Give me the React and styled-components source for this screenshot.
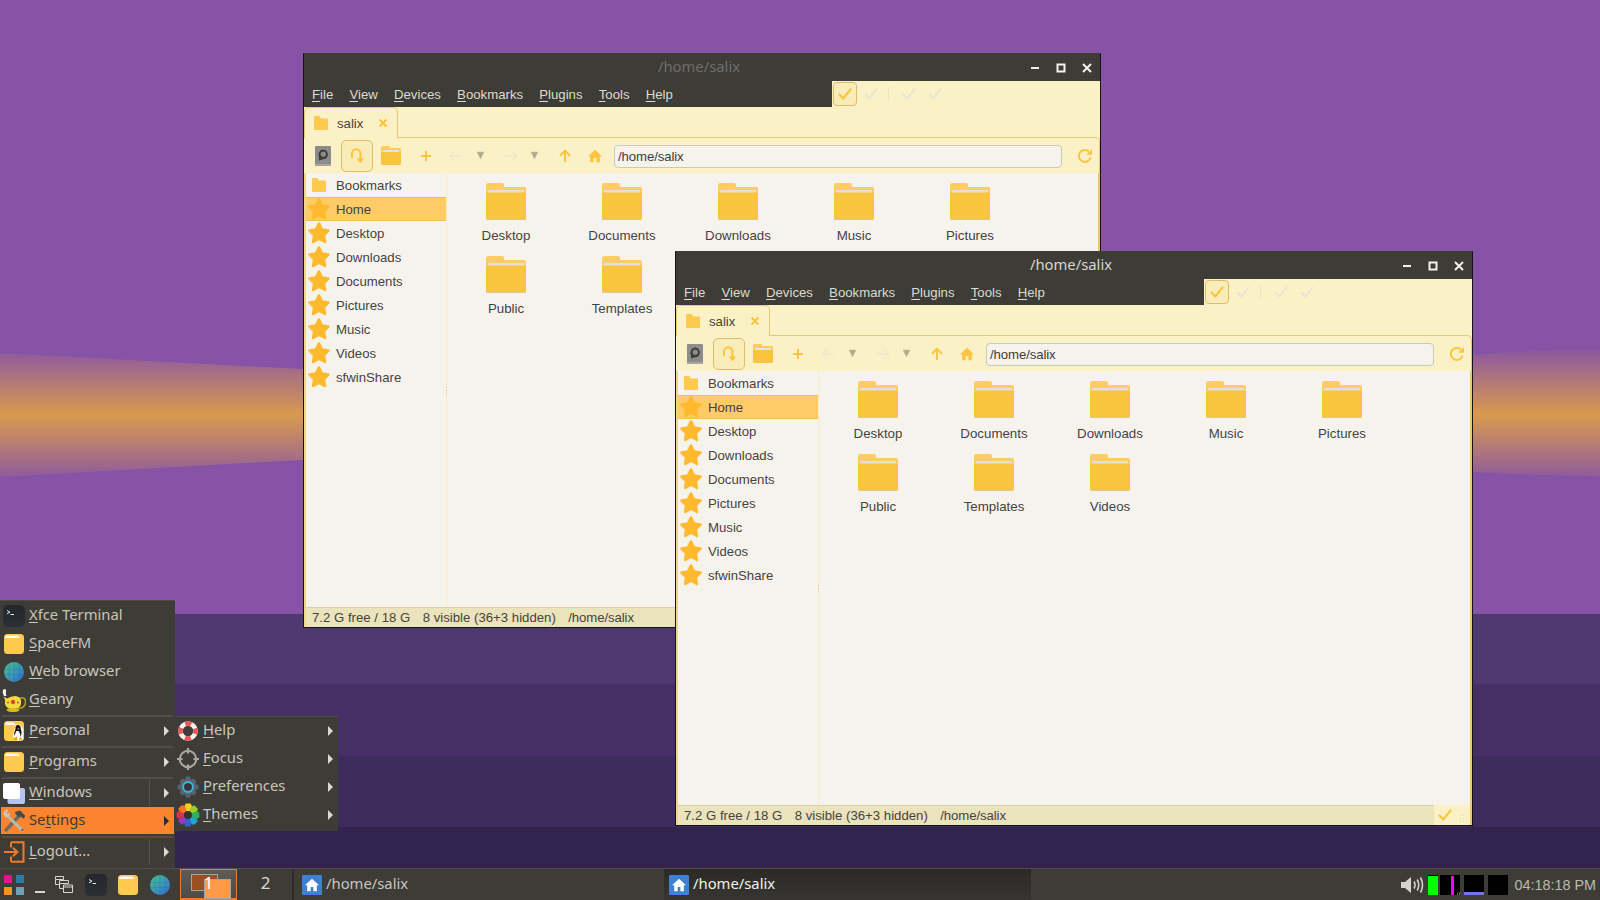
import React from 'react';
import styled, { createGlobalStyle } from 'styled-components';

const DARK = '#3d3c37';
const CREAM = '#fbf1c7';
const PAPER = '#f6f3ed';
const LINE = '#e4c873';
const AMBER = '#fdc440';

const GlobalStyle = createGlobalStyle`
  html, body { margin: 0; padding: 0; background: #8653a6; }
  * { box-sizing: border-box; }
`;

const Desktop = styled.div`
  position: relative;
  width: 1600px;
  height: 900px;
  overflow: hidden;
  display: flex;
  flex-direction: column;
  justify-content: flex-end;
  font-family: "Liberation Sans", Arial, sans-serif;
`;

const Wall = styled.svg`
  position: absolute;
  left: 0;
  top: 0;
`;

const Wallpaper = () => (
  <Wall width="1600" height="900" viewBox="0 0 1600 900">
    <defs>
      <linearGradient id="sun" gradientUnits="userSpaceOnUse" x1="0" y1="345" x2="0" y2="485">
        <stop offset="0" stopColor="#8653a6" />
        <stop offset="0.5" stopColor="#d99a4e" />
        <stop offset="1" stopColor="#8653a6" />
      </linearGradient>
    </defs>
    <rect width="1600" height="900" fill="#8653a6" />
    <path d="M0 353 L300 369 Q800 395 1473 355 Q1540 349 1600 350 L1600 476 Q1540 476 1473 472 Q800 430 300 460 L0 477 Z" fill="url(#sun)" />
    <rect y="614" width="1600" height="71" fill="#4d3870" />
    <rect y="684" width="1600" height="72" fill="#452f65" />
    <rect y="756" width="1600" height="71" fill="#3e2d5c" />
    <rect y="827" width="1600" height="73" fill="#32244e" />
  </Wall>
);

/* ---------- drawn icons ---------- */

const Svg = ({ s = 16, h, vb, children }) => (
  <svg width={s} height={h || s} viewBox={vb || `0 0 ${s} ${h || s}`} style={{ display: 'block', flex: 'none' }}>
    {children}
  </svg>
);

const FolderBig = () => (
  <Svg s={40} h={37}>
    <path d="M0 2.5Q0 0 2.5 0H16Q18 0 18 2V4H38Q40 4 40 6V12H0Z" fill="#ffcb66" />
    <rect x="2" y="7" width="36" height="5" fill="#e2e0dc" />
    <path d="M0 10H1.5L2 9.5H38L38.5 10H40V34.5Q40 37 37.5 37H2.5Q0 37 0 34.5Z" fill="#f9c53f" />
    <rect y="36" width="40" height="1" fill="#d9c89a" rx="0.5" />
  </Svg>
);

const FolderSmall = () => (
  <Svg s={14} h={14}>
    <path d="M0 1Q0 0 1 0H5.5L7 2.5H13Q14 2.5 14 3.5V13Q14 14 13 14H1Q0 14 0 13Z" fill="#fdc94f" />
  </Svg>
);

const FolderTool = () => (
  <Svg s={20} h={19}>
    <path d="M0 1.5Q0 0 1.5 0H8Q9 0 9 1V2H19Q20 2 20 3V6H0Z" fill="#ffcb66" />
    <rect x="2" y="4" width="16" height="2" fill="#e6e3dc" />
    <path d="M0 6H20V17.5Q20 19 18.5 19H1.5Q0 19 0 17.5Z" fill="#f9c53f" />
  </Svg>
);

const Star = () => (
  <Svg s={22} vb="1 1 20 20">
    <path d="M11 2.5L13.6 8 19.5 8.8 15.2 13 16.3 19 11 16.1 5.7 19 6.8 13 2.5 8.8 8.4 8Z" fill="#ffb92e" stroke="#ffb92e" strokeWidth="2.6" strokeLinejoin="round" />
  </Svg>
);

const Check = ({ c = AMBER, s = 16 }) => (
  <Svg s={s} vb="0 0 16 16">
    <path d="M2.5 8.5L6.2 12.5 13.5 3.5" fill="none" stroke={c} strokeWidth="2.2" strokeLinecap="round" strokeLinejoin="round" />
  </Svg>
);

const ArrowLeft = ({ c }) => (
  <Svg s={14} vb="0 0 14 14">
    <path d="M13 7H2M6.5 2L1.5 7l5 5" fill="none" stroke={c} strokeWidth="1.7" />
  </Svg>
);
const ArrowRight = ({ c }) => (
  <Svg s={14} vb="0 0 14 14">
    <path d="M1 7H12M7.5 2l5 5-5 5" fill="none" stroke={c} strokeWidth="1.7" />
  </Svg>
);
const ArrowUp = () => (
  <Svg s={14} vb="0 0 14 14">
    <path d="M7 13V2M2 6.8L7 1.6l5 5.2" fill="none" stroke={AMBER} strokeWidth="2" />
  </Svg>
);
const Plus = () => (
  <Svg s={12} vb="0 0 12 12">
    <path d="M6 1V11M1 6H11" stroke={AMBER} strokeWidth="2" />
  </Svg>
);
const DropTriangle = () => (
  <Svg s={10} h={9}>
    <path d="M1 1H8L4.5 8Z" fill="#aea98f" stroke="#c9c5a8" strokeWidth="0.6" />
  </Svg>
);
const HomeGlyph = ({ c = AMBER, s = 14 }) => (
  <Svg s={s} vb="0 0 14 14">
    <path d="M7 0.8L0 7.2H2.2V13.2H5.6V9H8.4V13.2H11.8V7.2H14Z" fill={c} />
  </Svg>
);
const Reload = () => (
  <Svg s={16} vb="0 0 16 16">
    <path d="M13.6 9.5A6 6 0 1 1 11.8 3.4" fill="none" stroke={AMBER} strokeWidth="2" />
    <path d="M15 1V6.8H9.2Z" fill={AMBER} />
  </Svg>
);
const UTurn = () => (
  <Svg s={14} h={16} vb="0 0 14 16">
    <path d="M2 10V5.5a4.2 4.2 0 0 1 8.4 0V13" fill="none" stroke={AMBER} strokeWidth="2" />
    <path d="M6.8 10.5H14L10.4 15.5Z" fill={AMBER} />
  </Svg>
);
const FindIcon = () => (
  <Svg s={16} h={20}>
    <rect width="16" height="20" fill="#8c8c8c" rx="1" />
    <rect width="16" height="2" y="18" fill="#a5a5a5" />
    <path d="M8 3.5a5 5 0 0 1 4.6 6.6 5 5 0 0 1-4.6 3.2L4 14.6V11A5.2 5.2 0 0 1 8 3.5Z" fill="#3d3c37" />
    <circle cx="8.3" cy="8.2" r="2.6" fill="#8c8c8c" />
  </Svg>
);

const WinMin = () => (
  <Svg s={10}><rect x="1" y="4" width="8" height="2" fill="#f3f1ea" /></Svg>
);
const WinMax = () => (
  <Svg s={10}><rect x="1.5" y="1.5" width="7" height="7" fill="none" stroke="#f3f1ea" strokeWidth="2" /></Svg>
);
const WinClose = () => (
  <Svg s={10}><path d="M1 1L9 9M9 1L1 9" stroke="#f3f1ea" strokeWidth="2" /></Svg>
);

const TerminalIcon = () => (
  <Svg s={22} vb="0 0 22 22">
    <defs>
      <linearGradient id="term" x1="0" y1="0" x2="0" y2="1">
        <stop offset="0" stopColor="#22282e" />
        <stop offset="1" stopColor="#2b3036" />
      </linearGradient>
    </defs>
    <rect width="22" height="22" rx="5" fill="url(#term)" />
    <path d="M4 5.5L7 7.2 4 8.8" fill="none" stroke="#e8e8e8" strokeWidth="1" />
    <path d="M7.5 9.5H11" stroke="#e8e8e8" strokeWidth="1" />
  </Svg>
);
const SpaceFmIcon = () => (
  <Svg s={20} vb="0 0 20 20">
    <rect width="20" height="20" rx="3.5" fill="#fdc94f" />
    <path d="M1.5 1.5H13.5Q15 1.5 15.5 3L16 4H2.5Q1.5 4 1.5 3Z" fill="#fff6d8" />
    <path d="M1.5 2H9L11 4H1.5Z" fill="#fffdf3" />
  </Svg>
);
const Globe = ({ id = 'g' }) => (
  <Svg s={20} vb="0 0 20 20">
    <defs>
      <linearGradient id={id} x1="0" y1="0" x2="1" y2="1">
        <stop offset="0" stopColor="#45c088" />
        <stop offset="0.55" stopColor="#3a97b8" />
        <stop offset="1" stopColor="#2d63d2" />
      </linearGradient>
    </defs>
    <circle cx="10" cy="10" r="10" fill={`url(#${id})`} />
    <path d="M0.5 7.5H19.5M0.5 12.5H19.5M10 0V20M5.5 1.5Q3.5 10 5.5 18.5M14.5 1.5Q16.5 10 14.5 18.5" fill="none" stroke="#1d5e96" strokeOpacity="0.28" strokeWidth="0.8" />
  </Svg>
);
const GeanyIcon = () => (
  <Svg s={24} vb="0 0 24 24">
    <path d="M2 8Q0 4 1 2Q3 0 4.2 2.5Q3.4 5 4.4 8Z" fill="#f0f0ee" />
    <path d="M17 10H21Q23.5 10 23.5 14T19.5 20H16" fill="none" stroke="#bfa21a" strokeWidth="1.6" />
    <path d="M1.5 8.5L5 10.5Q9 8 13 8T19 12V16Q18 21 11 21T3 16V12Z" fill="#f2da3f" />
    <ellipse cx="11" cy="22" rx="6.5" ry="2" fill="#d9b91e" />
    <circle cx="11" cy="14" r="2.2" fill="#d8492c" />
    <circle cx="6" cy="14.5" r="1" fill="#d8492c" />
    <circle cx="16" cy="14.5" r="1" fill="#d8492c" />
  </Svg>
);
const PersonalIcon = () => (
  <Svg s={20} vb="0 0 20 20">
    <rect width="20" height="20" rx="3.5" fill="#fdc94f" />
    <path d="M1.5 1.5H10L11.5 4H1.5Z" fill="#fffdf3" />
    <path d="M13.5 3.5Q10.5 3.5 10.7 7.5L9 14Q9 19 14 19.5L19 19V9Q18 3.5 13.5 3.5Z" fill="#fdfdfb" />
    <path d="M14 4Q11 4 11.5 8Q9.5 12 10.5 15L12 10.5Q13.5 9 15 10.5Q16.8 13 16.3 16Q18.5 12 16.8 8.5Q17 4 14 4Z" fill="#141414" />
    <path d="M13 7.2L15.6 7.2 14.3 8.6Z" fill="#eaa21d" />
    <path d="M10 17L13 15.5 13.5 19H10ZM15 19L16 16 18 17.5 17.5 19Z" fill="#eaa21d" />
  </Svg>
);
const WindowsIcon = () => (
  <Svg s={24} vb="0 0 24 24">
    <rect x="5.5" y="7" width="17.5" height="16" rx="2" fill="#b6c3f2" />
    <rect x="1" y="2" width="17" height="16" rx="2" fill="#ffffff" />
  </Svg>
);
const ToolsIcon = () => (
  <Svg s={24} vb="0 0 24 24">
    <path d="M4 21L17 7" stroke="#6b6a66" strokeWidth="3.4" strokeLinecap="round" />
    <path d="M13 3L18 1.5 23.5 7 21 10 19 7.5 16.5 8 13.5 5Z" fill="#4a4a48" />
    <path d="M3 4.5L20.5 21.5" stroke="#bdb9ae" strokeWidth="3" strokeLinecap="round" />
    <path d="M1.5 5.5A4 4 0 0 1 6.5 1L4.5 3.5 6 5 8 3.5A4 4 0 0 1 3 8Z" fill="#c9c5ba" />
    <circle cx="20.5" cy="21" r="1.3" fill="#6b6a66" />
  </Svg>
);
const LogoutIcon = () => (
  <Svg s={22} vb="0 0 22 22">
    <path d="M8 1.2H20.5V20.8H8" fill="none" stroke="#f07a2a" strokeWidth="2" />
    <path d="M8 6.5V1.2M8 15.5V20.8" stroke="#f07a2a" strokeWidth="2" />
    <path d="M1 11H13.5M10 6.8L14.5 11 10 15.2" fill="none" stroke="#f07a2a" strokeWidth="2" />
  </Svg>
);
const HelpIcon = () => (
  <Svg s={20} vb="0 0 20 20">
    <circle cx="10" cy="10" r="7.5" fill="none" stroke="#f6f2ec" strokeWidth="4.6" />
    <circle cx="10" cy="10" r="7.5" fill="none" stroke="#e8585a" strokeWidth="4.6" strokeDasharray="6 5.8" strokeDashoffset="3" />
  </Svg>
);
const FocusIcon = () => (
  <Svg s={24} vb="0 0 24 24">
    <circle cx="12" cy="12" r="8.2" fill="none" stroke="#a9a79f" strokeWidth="2" />
    <path d="M12 1V6.5M12 17.5V23M1 12H6.5M17.5 12H23" stroke="#a9a79f" strokeWidth="2.2" />
  </Svg>
);
const PrefsIcon = () => (
  <Svg s={22} vb="0 0 22 22">
    <path d="M9 0.5H13L13.8 3.8 16.6 2.6 19.4 5.4 18.2 8.2 21.5 9V13L18.2 13.8 19.4 16.6 16.6 19.4 13.8 18.2 13 21.5H9L8.2 18.2 5.4 19.4 2.6 16.6 3.8 13.8 0.5 13V9L3.8 8.2 2.6 5.4 5.4 2.6 8.2 3.8Z" fill="#566470" />
    <circle cx="11" cy="11" r="5" fill="none" stroke="#3fb5dc" strokeWidth="1.8" />
    <circle cx="11" cy="11" r="3.8" fill="#33363a" />
  </Svg>
);
const ThemesIcon = () => {
  const colours = ['#f7ce1e', '#9bd028', '#2fb05a', '#22a3d4', '#3465c8', '#8e3cc2', '#e0304d', '#f2762a'];
  return (
    <Svg s={24} vb="0 0 24 24">
      {colours.map((c, i) => (
        <path key={c} d="M12 12L8.6 3.6 9.5 0.6H14.5L16 3Z" fill={c} transform={`rotate(${i * 45} 12 12)`} />
      ))}
      <circle cx="12" cy="12" r="4" fill="#33322e" />
    </Svg>
  );
};
const VolumeIcon = () => (
  <Svg s={24} h={18} vb="0 0 24 18">
    <path d="M0 6H4L10 1V17L4 12H0Z" fill="#d5d3cb" />
    <path d="M13 5.5Q15 9 13 12.5M16.2 3.5Q19.2 9 16.2 14.5M19.5 1.5Q23.5 9 19.5 16.5" fill="none" stroke="#d5d3cb" strokeWidth="1.6" />
  </Svg>
);
const WindowsListIcon = () => (
  <Svg s={18} vb="0 0 18 18">
    <path d="M0.5 0.5H8.5V3.5H0.5ZM0.5 3.5V8.5H4M4.5 4.5H13.5V7.5H4.5ZM4.5 7.5V12.5H8M8.5 9H17.5V16.5H8.5Z M8.5 11H17.5" fill="none" stroke="#d8d5cb" strokeWidth="1" />
  </Svg>
);
const StartLogo = () => (
  <LogoGrid>
    <LogoCell $c="#e6148e" />
    <LogoCell $c="#2a7ba5" />
    <LogoCell $c="#f7931e" />
    <LogoCell $c="#69a3b5" />
  </LogoGrid>
);

/* ---------- window ---------- */

const Win = styled.div`
  position: absolute;
  left: ${p => p.$x}px;
  top: ${p => p.$y}px;
  width: 798px;
  height: 575px;
  border: 1px solid #141412;
  border-top-color: ${DARK};
  background: ${CREAM};
  display: flex;
  flex-direction: column;
`;

const TitleBar = styled.div`
  height: 27px;
  flex: none;
  display: flex;
  align-items: center;
  background: ${DARK};
`;

const Title = styled.div`
  flex: 1;
  padding: 0 0 4px 72px;
  text-align: center;
  font: 14.8px "Noto Sans", sans-serif;
  color: ${p => (p.$active ? '#d9d6cc' : '#6f6e68')};
`;

const WinButtons = styled.div`
  display: flex;
  width: 78px;
`;

const WinButton = styled.div`
  width: 26px;
  display: flex;
  justify-content: center;
`;

const MenuRow = styled.div`
  height: 26px;
  flex: none;
  display: flex;
`;

const MenuBar = styled.div`
  width: 528px;
  background: ${DARK};
  display: flex;
  align-items: center;
`;

const MenuEntry = styled.div`
  padding: 0 8.2px 0 8px;
  font-size: 13.2px;
  color: #dedbd0;
`;

const Mn = styled.span`
  text-decoration: underline;
  text-underline-offset: 2px;
  text-decoration-thickness: 1px;
`;

const CheckBar = styled.div`
  flex: 1;
  display: flex;
  align-items: center;
`;

const CheckButton = styled.div`
  margin-left: 1px;
  width: 24px;
  height: 24px;
  border: 1px solid #dfbc6a;
  border-radius: 4px;
  background: #f8ecb8;
  display: flex;
  align-items: center;
  justify-content: center;
`;

const CheckSlot = styled.div`
  width: ${p => p.$w}px;
  display: flex;
  justify-content: center;
`;

const CheckSep = styled.div`
  width: 1px;
  height: 14px;
  margin: 0 6px 0 3px;
  background: #f0e4b4;
`;

const TabRow = styled.div`
  height: 30px;
  flex: none;
  display: flex;
`;

const Tab = styled.div`
  width: 94px;
  height: 31px;
  position: relative;
  z-index: 1;
  padding-left: 9px;
  border: 1px solid ${LINE};
  border-bottom: none;
  border-radius: 5px 5px 0 0;
  background: ${CREAM};
  display: flex;
  align-items: center;
  font-size: 13.2px;
  color: #45433f;
`;

const TabLabel = styled.span`
  margin: 0 0 0 9px;
  width: 41px;
`;

const TabClose = styled.span`
  width: 10px;
  height: 10px;
  display: block;
`;

const Toolbar = styled.div`
  height: 36px;
  flex: none;
  padding-left: 2px;
  border-top: 1px solid ${LINE};
  border-right: 1px solid ${LINE};
  border-top-right-radius: 5px;
  display: flex;
  align-items: center;
`;

const ToolSlot = styled.div`
  width: ${p => p.$w}px;
  flex: none;
  display: flex;
  justify-content: center;
`;

const ToolButton = styled.div`
  width: 32px;
  height: 32px;
  margin-left: 1px;
  flex: none;
  border: 1px solid #dfbc6a;
  border-radius: 5px;
  background: #f8ecb8;
  display: flex;
  align-items: center;
  justify-content: center;
`;

const PathEntry = styled.div`
  width: 448px;
  height: 23px;
  margin: 1px 0 0 12px;
  flex: none;
  padding-left: 3px;
  border: 1px solid #cbc8bc;
  border-radius: 4px;
  background: ${PAPER};
  font-size: 13.2px;
  line-height: 21px;
  letter-spacing: -0.1px;
  color: #3f3d39;
`;

const ReloadSlot = styled.div`
  width: 36px;
  padding-left: 15px;
  flex: none;
`;

const Body = styled.div`
  flex: 1;
  min-height: 0;
  display: flex;
  background: ${PAPER};
  border-left: 2px solid #efd78a;
  border-right: 2px solid #e8c96b;
`;

const Sidebar = styled.div`
  width: 141px;
  flex: none;
  position: relative;
  border-right: 1px solid #f8eeb9;
  &::after {
    content: '';
    position: absolute;
    right: -1px;
    top: 214px;
    width: 1px;
    height: 7px;
    background: repeating-linear-gradient(#d9c78f 0 1px, transparent 1px 3px);
  }
`;

const SideRow = styled.div`
  height: 24px;
  display: flex;
  align-items: center;
  position: relative;
  font-size: 13.2px;
  color: #45433f;
  background: ${p => (p.$sel ? '#ffcb66' : 'transparent')};
  box-shadow: ${p => (p.$sel ? 'inset 0 1px 0 #f6bd55, inset 0 -1px 0 #f6bd55' : 'none')};
`;

const SideIcon = styled.div`
  width: 30px;
  padding-left: ${p => (p.$small ? 6 : 2)}px;
  flex: none;
  display: flex;
`;

const FileGrid = styled.div`
  flex: 1;
  padding: 10px 0 0 1px;
  display: grid;
  grid-template-columns: repeat(5, 116px);
  grid-auto-rows: 73px;
  align-content: start;
`;

const FileItem = styled.div`
  display: flex;
  flex-direction: column;
  align-items: center;
`;

const FileName = styled.div`
  margin-top: 8px;
  font-size: 13.3px;
  line-height: 16px;
  color: #45433f;
`;

const StatusBar = styled.div`
  height: 20px;
  flex: none;
  display: flex;
  border-left: 2px solid #efd78a;
  border-right: 2px solid #e8c96b;
  font-size: 13.2px;
  color: #45433f;
`;

const StatusText = styled.div`
  flex: 1;
  display: flex;
  gap: 12.5px;
  padding-left: 6px;
  align-items: center;
  background: #ebe3bb;
  border-top: 1px solid #d7d0ab;
`;

const StatusPath = styled.span`
  letter-spacing: -0.1px;
`;

const StatusGrip = styled.div`
  width: 36px;
  flex: none;
  background: ${CREAM};
  display: flex;
  align-items: center;
  padding-left: 3px;
  position: relative;
  &::after {
    content: '';
    position: absolute;
    right: 1px;
    bottom: 1px;
    width: 10px;
    height: 10px;
    background: radial-gradient(circle, #e7d89b 0.8px, transparent 1px) 0 0 / 3px 3px;
  }
`;

const FOLDERS = ['Desktop', 'Documents', 'Downloads', 'Music', 'Pictures', 'Public', 'Templates', 'Videos'];
const PLACES = ['Home', 'Desktop', 'Downloads', 'Documents', 'Pictures', 'Music', 'Videos', 'sfwinShare'];
const MENUS = [['F', 'ile'], ['V', 'iew'], ['D', 'evices'], ['B', 'ookmarks'], ['P', 'lugins'], ['T', 'ools'], ['H', 'elp']];

const FileWindow = ({ x, y, active }) => (
  <Win $x={x} $y={y}>
    <TitleBar>
      <Title $active={active}>/home/salix</Title>
      <WinButtons>
        <WinButton><WinMin /></WinButton>
        <WinButton><WinMax /></WinButton>
        <WinButton><WinClose /></WinButton>
      </WinButtons>
    </TitleBar>
    <MenuRow>
      <MenuBar>
        {MENUS.map(([k, rest]) => (
          <MenuEntry key={k}><Mn>{k}</Mn>{rest}</MenuEntry>
        ))}
      </MenuBar>
      <CheckBar>
        <CheckButton><Check /></CheckButton>
        <CheckSlot $w={28}><Check c="#ebe6d2" /></CheckSlot>
        <CheckSep />
        <CheckSlot $w={28}><Check c="#ebe6d2" /></CheckSlot>
        <CheckSlot $w={24}><Check c="#ebe6d2" /></CheckSlot>
      </CheckBar>
    </MenuRow>
    <TabRow>
      <Tab>
        <FolderSmall />
        <TabLabel>salix</TabLabel>
        <TabClose>
          <Svg s={10}><path d="M1.5 1.5L8.5 8.5M8.5 1.5L1.5 8.5" stroke={AMBER} strokeWidth="2" /></Svg>
        </TabClose>
      </Tab>
    </TabRow>
    <Toolbar>
      <ToolSlot $w={34}><FindIcon /></ToolSlot>
      <ToolButton><UTurn /></ToolButton>
      <ToolSlot $w={35}><FolderTool /></ToolSlot>
      <ToolSlot $w={35}><Plus /></ToolSlot>
      <ToolSlot $w={26}><ArrowLeft c="#eee8cb" /></ToolSlot>
      <ToolSlot $w={24}><DropTriangle /></ToolSlot>
      <ToolSlot $w={35}><ArrowRight c="#eee8cb" /></ToolSlot>
      <ToolSlot $w={14}><DropTriangle /></ToolSlot>
      <ToolSlot $w={46}><ArrowUp /></ToolSlot>
      <ToolSlot $w={14}><HomeGlyph /></ToolSlot>
      <PathEntry>/home/salix</PathEntry>
      <ReloadSlot><Reload /></ReloadSlot>
    </Toolbar>
    <Body>
      <Sidebar>
        <SideRow>
          <SideIcon $small><FolderSmall /></SideIcon>
          Bookmarks
        </SideRow>
        {PLACES.map((p, i) => (
          <SideRow key={p} $sel={i === 0}>
            <SideIcon><Star /></SideIcon>
            {p}
          </SideRow>
        ))}
      </Sidebar>
      <FileGrid>
        {FOLDERS.map(f => (
          <FileItem key={f}>
            <FolderBig />
            <FileName>{f}</FileName>
          </FileItem>
        ))}
      </FileGrid>
    </Body>
    <StatusBar>
      <StatusText>
        <span>7.2 G free / 18 G</span>
        <span>8 visible (36+3 hidden)</span>
        <StatusPath>/home/salix</StatusPath>
      </StatusText>
      <StatusGrip><Check /></StatusGrip>
    </StatusBar>
  </Win>
);

/* ---------- openbox menu ---------- */

const MainMenu = styled.div`
  position: absolute;
  left: 0;
  top: 600px;
  width: 175px;
  height: 268px;
  padding: 1px 1px 0;
  background: ${DARK};
  border-top: 1px solid #4d4c47;
  font: 14.8px "Noto Sans", sans-serif;
  color: #c9c6bb;
`;

const SubMenu = styled.div`
  position: absolute;
  left: 175px;
  top: 716px;
  width: 163px;
  height: 115px;
  background: ${DARK};
  border-top: 1px solid #4d4c47;
  font: 14.8px "Noto Sans", sans-serif;
  color: #c9c6bb;
`;

const TopGroup = styled.div`
  margin-bottom: 1px;
`;

const Item = styled.div`
  height: ${p => p.$h || 28}px;
  display: flex;
  align-items: center;
  padding-left: 1px;
  white-space: nowrap;
  background: ${p => (p.$sel ? '#fb8430' : 'transparent')};
  color: ${p => (p.$sel ? '#3d3c37' : 'inherit')};
`;

const ItemIcon = styled.div`
  width: 24px;
  margin-right: 3px;
  flex: none;
  display: flex;
  justify-content: center;
`;

const ItemLabel = styled.span`
  line-height: 20px;
  padding-bottom: 4px;
`;

const ItemSep = styled.div`
  height: 2px;
  margin: 0 1px;
  background: #4f4e49;
`;

const ItemGap = styled.div`
  height: 2px;
`;

const ItemEnd = styled.div`
  margin-left: auto;
  display: flex;
  align-items: center;
`;

const ItemDivider = styled.div`
  width: 1px;
  height: 26px;
  margin-right: 14px;
  background: #55544f;
`;

const MenuArrow = styled.div`
  width: 0;
  height: 0;
  margin-right: 5px;
  border-style: solid;
  border-width: 5px 0 5px 5px;
  border-color: transparent transparent transparent ${p => (p.$dark ? '#2c2b28' : '#dcd9cf')};
`;

const ArrowEnd = ({ divider, dark }) => (
  <ItemEnd>
    {divider && <ItemDivider />}
    <MenuArrow $dark={dark} />
  </ItemEnd>
);

/* ---------- panel ---------- */

const Panel = styled.div`
  position: relative;
  height: 32px;
  flex: none;
  display: flex;
  background: ${DARK};
  border-top: 1px solid #504f4a;
  font: 14.8px "Noto Sans", sans-serif;
  color: #c9c6bb;
`;

const Slot = styled.div`
  width: ${p => p.$w}px;
  flex: none;
  display: flex;
  align-items: center;
  justify-content: center;
`;

const LogoGrid = styled.div`
  display: grid;
  grid-template-columns: 8px 8px;
  gap: 4px;
`;

const LogoCell = styled.div`
  width: 8px;
  height: 8px;
  background: ${p => p.$c};
`;

const MinGlyph = styled.div`
  width: 10px;
  height: 2px;
  margin-top: 15px;
  background: #d8d5cb;
`;

const PagerDesk = styled.div`
  position: relative;
  width: ${p => p.$w}px;
  flex: none;
  display: flex;
  align-items: center;
  justify-content: center;
  padding-bottom: 4px;
  padding-left: ${p => (p.$active ? 0 : 2)}px;
  font-size: 17px;
  color: #dcd9cf;
  border: ${p => (p.$active ? '1px solid #f07a2a' : 'none')};
  border-bottom-width: ${p => (p.$active ? '2px' : '0')};
  border-right: ${p => (p.$active ? '1px solid #f07a2a' : '2px solid #2e2d2a')};
  background: ${p => (p.$active ? 'linear-gradient(#5c5b56, #4c4b47)' : 'transparent')};
`;

const MiniWin = styled.div`
  position: absolute;
  left: ${p => p.$x}px;
  top: ${p => p.$y}px;
  width: ${p => p.$w}px;
  height: ${p => p.$h}px;
  background: ${p => p.$c};
  border: 1px solid #a5a39b;
`;

const DeskNumber = styled.span`
  position: relative;
  color: #ffffff;
`;

const TaskButton = styled.div`
  width: ${p => p.$w}px;
  flex: none;
  display: flex;
  align-items: center;
  gap: 4px;
  padding-left: ${p => p.$pad}px;
  color: ${p => (p.$active ? '#f2f0e8' : '#c9c6bb')};
  background: ${p => (p.$active ? 'linear-gradient(#2b2a28, #363531)' : 'transparent')};
`;

const TaskLabel = styled.span`
  line-height: 20px;
  padding-bottom: 4px;
`;

const HomeBadge = styled.div`
  width: 20px;
  height: 20px;
  flex: none;
  background: #3f80d2;
  border-radius: 1px;
  display: flex;
  align-items: center;
  justify-content: center;
`;

const Tray = styled.div`
  margin-left: auto;
  display: flex;
  align-items: center;
  padding-right: 4px;
`;

const Meter = styled.div`
  position: relative;
  width: ${p => p.$w || 20}px;
  height: 20px;
  margin-left: ${p => p.$gap}px;
  background: #000;
  overflow: hidden;
`;

const MeterFill = styled.div`
  position: absolute;
  left: ${p => p.$x}px;
  bottom: 0;
  width: ${p => p.$w}px;
  height: ${p => p.$h}px;
  background: ${p => p.$c};
`;

const Clock = styled.div`
  margin-left: 6px;
  font: 14.4px "Liberation Sans", Arial, sans-serif;
  color: #bdbab0;
`;

const MenuList = [
  { key: 'X', rest: 'fce Terminal', icon: <TerminalIcon /> },
  { key: 'S', rest: 'paceFM', icon: <SpaceFmIcon /> },
  { key: 'W', rest: 'eb browser', icon: <Globe id="gm" /> },
  { key: 'G', rest: 'eany', icon: <GeanyIcon /> },
];

const SubList = [
  { key: 'H', rest: 'elp', icon: <HelpIcon /> },
  { key: 'F', rest: 'ocus', icon: <FocusIcon /> },
  { key: 'P', rest: 'references', icon: <PrefsIcon /> },
  { key: 'T', rest: 'hemes', icon: <ThemesIcon /> },
];

const App = () => (
  <Desktop>
    <GlobalStyle />
    <Wallpaper />
    <FileWindow x={303} y={53} />
    <FileWindow x={675} y={251} active />

    <MainMenu>
      <TopGroup>
        {MenuList.map(m => (
          <Item key={m.key}>
            <ItemIcon>{m.icon}</ItemIcon>
            <ItemLabel><Mn>{m.key}</Mn>{m.rest}</ItemLabel>
          </Item>
        ))}
      </TopGroup>
      <ItemSep />
      <Item $h={27}>
        <ItemIcon><PersonalIcon /></ItemIcon>
        <ItemLabel><Mn>P</Mn>ersonal</ItemLabel>
        <ArrowEnd />
      </Item>
      <ItemGap />
      <ItemSep />
      <Item $h={27}>
        <ItemIcon><SpaceFmIcon /></ItemIcon>
        <ItemLabel><Mn>P</Mn>rograms</ItemLabel>
        <ArrowEnd />
      </Item>
      <ItemGap />
      <ItemSep />
      <Item $h={28}>
        <ItemIcon><WindowsIcon /></ItemIcon>
        <ItemLabel><Mn>W</Mn>indows</ItemLabel>
        <ArrowEnd divider />
      </Item>
      <Item $h={27} $sel>
        <ItemIcon><ToolsIcon /></ItemIcon>
        <ItemLabel>Se<Mn>t</Mn>tings</ItemLabel>
        <ArrowEnd dark />
      </Item>
      <ItemGap />
      <ItemSep />
      <Item $h={27}>
        <ItemIcon><LogoutIcon /></ItemIcon>
        <ItemLabel><Mn>L</Mn>ogout...</ItemLabel>
        <ArrowEnd divider />
      </Item>
    </MainMenu>

    <SubMenu>
      {SubList.map(m => (
        <Item key={m.key}>
          <ItemIcon>{m.icon}</ItemIcon>
          <ItemLabel><Mn>{m.key}</Mn>{m.rest}</ItemLabel>
          <ArrowEnd />
        </Item>
      ))}
    </SubMenu>

    <Panel>
      <Slot $w={28}><StartLogo /></Slot>
      <Slot $w={24}><MinGlyph /></Slot>
      <Slot $w={24}><WindowsListIcon /></Slot>
      <Slot $w={40}><TerminalIcon /></Slot>
      <Slot $w={24}><SpaceFmIcon /></Slot>
      <Slot $w={40}><Globe id="gp" /></Slot>
      <PagerDesk $w={57} $active>
        <MiniWin $x={10} $y={4} $w={27} $h={17} $c="#9c4f22" />
        <MiniWin $x={23} $y={9} $w={27} $h={20} $c="#ff9a4a" />
        <DeskNumber>1</DeskNumber>
      </PagerDesk>
      <PagerDesk $w={57}>2</PagerDesk>
      <TaskButton $w={370} $pad={8}>
        <HomeBadge><HomeGlyph c="#ffffff" /></HomeBadge>
        <TaskLabel>/home/salix</TaskLabel>
      </TaskButton>
      <TaskButton $w={367} $pad={5} $active>
        <HomeBadge><HomeGlyph c="#ffffff" /></HomeBadge>
        <TaskLabel>/home/salix</TaskLabel>
      </TaskButton>
      <Tray>
        <VolumeIcon />
        <Meter $w={10} $gap={3}>
          <MeterFill $x={0} $w={10} $h={19} $c="#00ff00" />
        </Meter>
        <Meter $gap={2}>
          <MeterFill $x={11} $w={3} $h={19} $c="#ff00ff" />
          <MeterFill $x={17} $w={1} $h={2} $c="#ff00ff" />
          <MeterFill $x={19} $w={1} $h={3} $c="#ff00ff" />
        </Meter>
        <Meter $gap={4}>
          <MeterFill $x={0} $w={20} $h={3} $c="#7474f2" />
        </Meter>
        <Meter $gap={4} />
        <Clock>04:18:18 PM</Clock>
      </Tray>
    </Panel>
  </Desktop>
);

export default App;
